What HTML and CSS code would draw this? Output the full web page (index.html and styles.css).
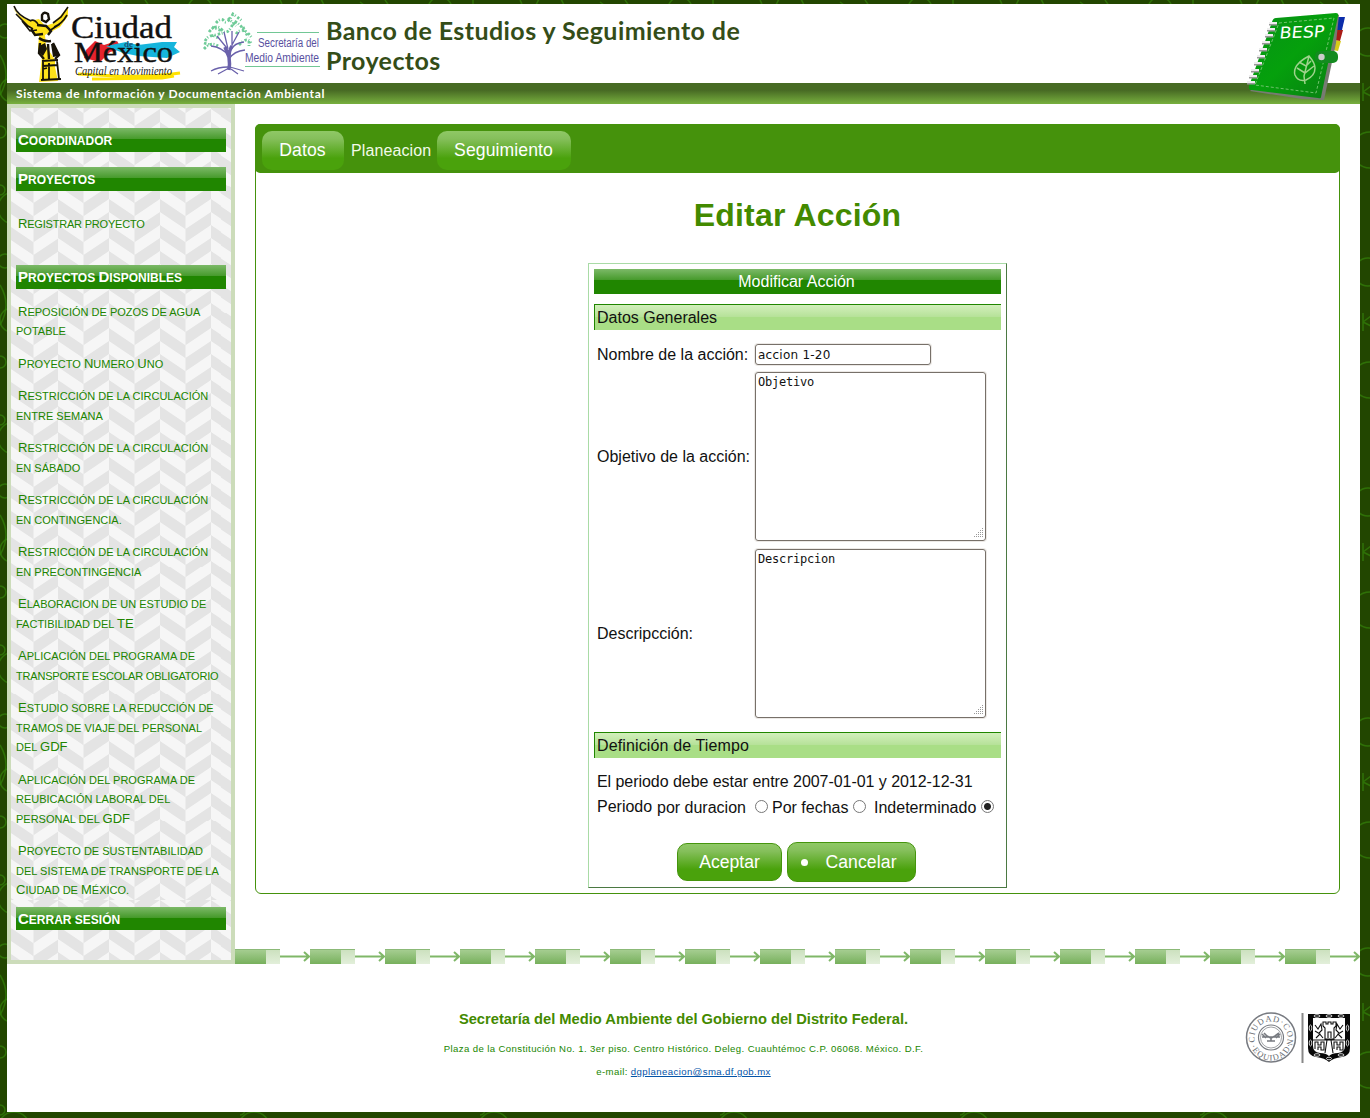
FILE: index.html
```html
<!DOCTYPE html>
<html lang="es">
<head>
<meta charset="utf-8">
<title>Banco de Estudios y Seguimiento de Proyectos</title>
<link rel="stylesheet" href="styles.css">
</head>
<body>
<div class="page">
<header class="header">
  <div class="brand">
    <svg class="logo-city" width="178" height="79" viewBox="7 4 178 79">
      <path d="M78 74l38 2q35 1 64-3M92 79l70-1 12-2" stroke="#ffe100" stroke-width="3" fill="none"/>
      <path d="M86 50l9-9 9 4 13-4 5 8-12 3-10 10-16-4z" fill="#e5232d"/>
      <path d="M106 46l20-4 12 3 24-3 15 0-3 5 6 5-13 6-29-2-15-3z" fill="#16b5dc"/>
      <path d="M13 7q4 9 17 14l9-2 6 7 9-3 14-16 0 9-8 11-15 8 1 11 9 14 0 7 3 14-19 1 2-16 1-9-4-8 1-13-6-2-2-6-9-8-7-9z" fill="#ffe21a"/>
      <path d="M14 6q3 9 17 15M16 14l12 12 5 3M22 21l8 10 7-1M30 21q5-3 9 5M68 7l-7 10-8 6M67 15q-5 9-13 12M60 24l-11 7" stroke="#18140a" stroke-width="1.600" fill="none"/>
      <path d="M42 15q2-4 6-1l1 5-3 3-4-2zM37 25l9 1 5 5-3 4M31 29l4 6 8-1M39 38q5 4 12 3M40 43l-1 10 5 6M53 43l6 12-4 4M48 44l1 15" stroke="#18140a" stroke-width="2.400" fill="none"/>
      <path d="M39 46l6-3 2 6-4 7-4-4zM51 44l3 0 5 12-6 1z" fill="#18140a"/>
      <path d="M42 61l16-1M43 61l0 19M49 63l0 17M57 61l2 18M41 80l20-1M43 66l14-1M43 69l4-1" stroke="#18140a" stroke-width="1.800" fill="none"/>
      <text x="71" y="38" class="city-name" textLength="101" lengthAdjust="spacingAndGlyphs">Ciudad</text>
      <text x="74" y="62" class="city-name low" textLength="99" lengthAdjust="spacingAndGlyphs">México</text>
      <text x="124" y="47" class="city-de">de</text>
      <text x="75" y="75" class="city-tag" textLength="97" lengthAdjust="spacingAndGlyphs">Capital en Movimiento</text>
    </svg>
    <svg class="logo-sma" width="121" height="66" viewBox="201 12 121 66">
      <g fill="none" stroke="#6fcb98" stroke-width="2.800" stroke-dasharray="2.500 1.500 1 2">
        <path d="M216 23q5-6 8-2t9-7q7 5 9 7M209 32q7-9 13-2t12-9q9 5 10 11M205 41q5-9 13-3M236 34q7-9 16 4M204 49q7-8 14-3M239 45q8-9 12-2M212 27l10 4M228 18l8 8M243 27l5 10M211 36l12-3M204 43l6 2M249 41v5"/>
      </g>
      <g fill="none" stroke="#6a61ab">
        <path stroke-width="3.500" d="M229 70q1-6 0-13l-4-10M229 58q0-8 3-12"/>
        <path stroke-width="1.300" d="M229 56q-7-9-18-10M226 47l-9-11M228 49l-4-17M232 45l7-13M232 46v-15M231 50q3-7 13-8M229 59q5-8 16-9M228 67q-10 0-17 4M229 68l-11 6M230 67l14 4M231 69l7 5"/>
      </g>
      <path d="M257 32.500h62M245 66.500h75" stroke="#72c795"/>
      <text x="258" y="47" class="sma" textLength="61" lengthAdjust="spacingAndGlyphs">Secretaría del</text>
      <text x="245" y="62" class="sma" textLength="74" lengthAdjust="spacingAndGlyphs">Medio Ambiente</text>
    </svg>
    <h1 class="site-title">Banco de Estudios y Seguimiento de<br>Proyectos</h1>
  </div>
  <div class="strap"><span>Sistema de Información y Documentación Ambiental</span></div>
  <svg class="logo-besp" width="104" height="94" viewBox="1246 10 104 94">
    <defs><linearGradient id="cover" x1="0" y1="0" x2="1" y2="1"><stop offset="0" stop-color="#079117"/><stop offset=".5" stop-color="#05a00c"/><stop offset="1" stop-color="#087d12"/></linearGradient></defs>
    <path d="M1334 17l11 0-3 13-9 0z" fill="#0b2caa"/>
    <path d="M1334 30l9 0-3 11-9-1z" fill="#a91b16"/>
    <path d="M1332 40l9 1-3 10-10-2z" fill="#d7cb17"/>
    <path d="M1336 14l3 1-3 28-12 57-22-1-52-8z" fill="#777b72"/>
    <path d="M1276 18l60-5q3 0 2 3l-17 81q0 2-3 1l-66-8q-4 0-3-4l23-64q1-4 4-4z" fill="url(#cover)"/>
    <path d="M1279 23l55-5-18 75-61-8z" fill="none" stroke="#79c776" stroke-width=".9" stroke-dasharray="3 2"/>
    <g stroke="#999" stroke-width="3"><path d="M1269 24h8M1267 30h8M1265 36h8M1262 43h8M1259 50h8M1257 57h8M1254 64h8M1251 71h8M1249 77h8M1247 83h8"/></g>
    <g stroke="#eee" stroke-width="2"><path d="M1269 23h8M1267 29h8M1265 35h8M1262 42h8M1259 49h8M1257 56h8M1254 63h8M1251 70h8M1249 76h8M1247 82h8"/></g>
    <rect x="1315" y="51" width="23" height="12" rx="5" fill="#148b20"/>
    <circle cx="1321.500" cy="57" r="3.200" fill="#ccc"/>
    <path d="M1309 56q-17 9-14 19 3 7 11 5 9-4 9-12 0-5-6-12zl-5 20 1 8M1297 68l8 5 9-7M1299 62l7 4 5-5" fill="none" stroke="#9fd38d" stroke-width="1.500"/>
    <text class="besp" textLength="45" lengthAdjust="spacingAndGlyphs" transform="translate(1279 38.500) rotate(-2) skewX(-8)">BESP</text>
  </svg>
</header>

<div class="main">
  <aside class="sidebar">
    <div class="menu">
      <h2><i>C</i>oordinador</h2>
      <h2><i>P</i>royectos</h2>
      <p class="register"><a><i>R</i>egistrar proyecto</a></p>
      <h2><i>P</i>royectos <i>D</i>isponibles</h2>
      <ul>
        <li><i>R</i>eposición de pozos de agua<br>potable</li>
        <li><i>P</i>royecto <i>N</i>umero <i>U</i>no</li>
        <li><i>R</i>estricción de la circulación<br>entre semana</li>
        <li><i>R</i>estricción de la circulación<br>en sábado</li>
        <li><i>R</i>estricción de la circulación<br>en contingencia.</li>
        <li><i>R</i>estricción de la circulación<br>en precontingencia</li>
        <li><i>E</i>laboracion de un estudio de<br>factibilidad del <i>TE</i></li>
        <li><i>A</i>plicación del programa de<br><span class="tight">transporte escolar obligatorio</span></li>
        <li><i>E</i>studio sobre la reducción de<br>tramos de viaje del personal<br>del <i>GDF</i></li>
        <li><i>A</i>plicación del programa de<br>reubicación laboral del<br>personal del <i>GDF</i></li>
        <li><i>P</i>royecto de sustentabilidad<br>del sistema de transporte de la<br><i>C</i>iudad de <i>M</i>éxico.</li>
      </ul>
    </div>
    <div class="session"><h2><i>C</i>errar sesión</h2></div>
  </aside>

  <main class="content">
    <section class="panel">
      <nav class="tabs"><a class="tab">Datos</a><span class="current">Planeacion</span><a class="tab wide">Seguimiento</a></nav>
      <h2 class="title">Editar Acción</h2>
      <form class="form">
        <div class="legend">Modificar Acción</div>
        <div class="group">Datos Generales</div>
        <div class="fields">
          <label>Nombre de la acción:</label><div class="box input">accion 1-20</div>
          <label>Objetivo de la acción:</label><div class="box area">Objetivo<svg class="grip" width="12" height="12"><path d="M10 1.500h1M8 3.500h1M10 3.500h1M6 5.500h1M8 5.500h1M10 5.500h1M4 7.500h1M6 7.500h1M8 7.500h1M10 7.500h1M2 9.500h1M4 9.500h1M6 9.500h1M8 9.500h1M10 9.500h1" stroke="#999"/></svg></div>
          <label>Descripcción:</label><div class="box area">Descripcion<svg class="grip" width="12" height="12"><path d="M10 1.500h1M8 3.500h1M10 3.500h1M6 5.500h1M8 5.500h1M10 5.500h1M4 7.500h1M6 7.500h1M8 7.500h1M10 7.500h1M2 9.500h1M4 9.500h1M6 9.500h1M8 9.500h1M10 9.500h1" stroke="#999"/></svg></div>
        </div>
        <div class="group time">Definición de Tiempo</div>
        <p class="note">El periodo debe estar entre 2007-01-01 y 2012-12-31</p>
        <div class="period"><span class="p0">Periodo</span><span class="p1">por duracion</span><b class="radio"></b><span class="p2">Por fechas</span><b class="radio"></b><span class="p3">Indeterminado</span><b class="radio on"></b></div>
        <div class="actions"><a class="button ok">Aceptar</a><a class="button cancel"><b class="dot"></b>Cancelar</a></div>
      </form>
    </section>
    <div class="arrows"></div>
  </main>
</div>

<footer class="footer">
  <div class="credits">
    <h3>Secretaría del Medio Ambiente del Gobierno del Distrito Federal.</h3>
    <p class="address">Plaza de la Constitución No. 1. 3er piso. Centro Histórico. Deleg. Cuauhtémoc C.P. 06068. México. D.F.</p>
    <p class="mail">e-mail: <a>dgplaneacion@sma.df.gob.mx</a></p>
  </div>
  <svg class="seals" width="107" height="52" viewBox="1245 1012 107 52">
    <defs><path id="ringTop" d="M1255.300 1043a16.500 16.500 0 1 1 31.400 0"/><path id="ringLow" d="M1249.500 1039a21.500 21.500 0 0 0 43 0"/></defs>
    <g fill="none" stroke="#777a80"><circle cx="1271" cy="1037.500" r="24.500" stroke-width="1.500"/><circle cx="1271" cy="1037.500" r="12.500" stroke-width="1.200"/><circle cx="1271" cy="1037.500" r="10.500" stroke-width=".7"/><path d="M1262 1037h18M1264 1033l3 3 4 2 4-2 4-3M1262 1034l4 4M1280 1034l-4 4M1267 1041h8M1271 1037v4" stroke-width="1.600"/></g>
    <text class="seal-text"><textPath href="#ringTop" textLength="62" startOffset="1">CIUDAD·CON</textPath></text>
    <text class="seal-text"><textPath href="#ringLow" textLength="54" startOffset="7">·EQUIDAD·</textPath></text>
    <path d="M1302.500 1013v50" stroke="#888" stroke-width="2"/>
    <path d="M1308 1014h42v34q0 8-8 9-9 1-13 5-4-4-13-5-8-1-8-9z" fill="#080808"/>
    <path d="M1313 1018h32v28q0 6-7 7-6 0-9 3-3-3-9-3-7-1-7-7z" fill="#fff"/>
    <g fill="none" stroke="#111" stroke-width="1.100"><path d="M1325 1039v-11l-2-2v-4h3v2h2v-2h3v2h2v-2h3v4l-2 2v11zM1328 1038v-6h3v6M1313 1040h32M1327 1040l-2 13M1331 1040l2 13M1315 1049v-7h3v3h3v-3h3v8h-3v-3h-3v3M1334 1049v-7h3v3h3v-3h3v8h-3v-3h-3v3M1315 1025l3 4 3-5 1 6-3 3 4 5M1315 1031l5 3-4 4M1343 1025l-3 4-3-5-1 6 3 3-4 5M1343 1031l-5 3 4 4"/></g>
    <g fill="none" stroke="#fff" stroke-width=".8"><ellipse cx="1317" cy="1016" rx="3" ry="1.300"/><ellipse cx="1329" cy="1016" rx="3" ry="1.300"/><ellipse cx="1341" cy="1016" rx="3" ry="1.300"/><ellipse cx="1310.500" cy="1028" rx="1.300" ry="3"/><ellipse cx="1347.500" cy="1028" rx="1.300" ry="3"/><ellipse cx="1310.500" cy="1043" rx="1.300" ry="3"/><ellipse cx="1347.500" cy="1043" rx="1.300" ry="3"/><ellipse cx="1317" cy="1055" rx="3" ry="1.300"/><ellipse cx="1341" cy="1055" rx="3" ry="1.300"/><ellipse cx="1329" cy="1058.500" rx="2.500" ry="1.300"/></g>
  </svg>
</footer>
</div>
</body>
</html>
```
FILE: styles.css
```css
* { box-sizing: border-box; }

body {
  margin: 0;
  padding: 4px 10px 6px 7px;
  font: 16px/20px "Liberation Sans", Arial, sans-serif;
  color: #111;
  background: #224600 url("data:image/svg+xml,%3Csvg xmlns='http://www.w3.org/2000/svg' width='240' height='230'%3E%3Cg fill='none' stroke='%23317e08' stroke-opacity='.75' stroke-width='1.5'%3E%3Ccircle cx='5' cy='31' r='7'/%3E%3Ccircle cx='12' cy='90' r='12'/%3E%3Ccircle cx='0' cy='132' r='6'/%3E%3Ccircle cx='0' cy='190' r='5'/%3E%3Ccircle cx='14' cy='208' r='16'/%3E%3Ccircle cx='70' cy='8' r='14'/%3E%3Ccircle cx='200' cy='9' r='12'/%3E%3Ccircle cx='168' cy='42' r='14'/%3E%3Ccircle cx='170' cy='150' r='18'/%3E%3Cpath d='M0 55q12 20 0 40M145 0q5 9 14 10M233 0v30M120 2l8 6M40 0q4 6 0 12M163 92v-9M163 92l8-6M163 92l8 4M163 92v9' /%3E%3C/g%3E%3C/svg%3E");
}

.page { height: 1108px; background: #fff; display: flex; flex-direction: column; }

/* Header */
.header { position: relative; height: 100px; }
.brand { height: 79px; display: flex; }
.logo-sma { margin: 8px 0 0 16px; }
.site-title {
  margin: 11px 0 0 4px;
  font: bold 25px/30px Lato, sans-serif;
  letter-spacing: .42px;
  color: #344d18;
  white-space: nowrap;
}
.city-name { font: 32px "Liberation Serif", serif; fill: #111; stroke: #111; stroke-width: .4px; }
.city-name.low { font-size: 29px; }
.city-de { font: bold 9px "Liberation Serif", serif; fill: #165577; }
.city-tag { font: italic 12px "Liberation Serif", serif; fill: #222; }
.sma { font: 12px "Liberation Sans", sans-serif; fill: #5850a0; }
.besp { font: 16px "DejaVu Sans", sans-serif; fill: #fff; }
.strap {
  height: 21px;
  padding-left: 9px;
  font: bold 12px/21px Lato, sans-serif;
  letter-spacing: .63px;
  color: #fff;
  background: linear-gradient(#486b24 0 35%, #78b03e);
}
.logo-besp { position: absolute; right: 10px; top: 6px; }

/* Sidebar */
.main { display: flex; height: 860px; }
.sidebar { width: 228px; border: 4px solid #ccdcba; color: #208400; }
.menu, .session {
  padding: 0 5px;
  background: #f6f6f6 url("data:image/svg+xml,%3Csvg xmlns='http://www.w3.org/2000/svg' width='50.7' height='25.800'%3E%3Cpath d='M0-25.800l25.350 17v13L0-13zM0 0l25.350 17v13L0 13zM25.350 4l25.350-17V0L25.350 17zM25.350 29.800l25.350-17v13L25.350 42.800z' fill='%23e4e4e4'/%3E%3C/svg%3E") 47.500px 14px;
}
.menu { height: 792px; padding-top: 20px; }
.session { height: 60px; padding-top: 7px; background-position: 47.500px 0; }
.sidebar h2 {
  height: 24px;
  margin: 0 0 15px;
  padding-left: 2px;
  font-size: 12px;
  line-height: 26px;
  text-transform: uppercase;
  color: #fff;
  background: linear-gradient(#7cb968, #469a2b 46%, #208600 46%);
}
.sidebar h2 i { font-size: 15px; line-height: 1px; }
.session h2 { height: 23px; }
.sidebar i { font-style: normal; }
.sidebar p, .sidebar li { font-size: 11px; line-height: 19.500px; text-indent: 2px; text-transform: uppercase; white-space: nowrap; }
.sidebar p i, .sidebar li i { font-size: 13px; line-height: 1px; }
.sidebar .register { margin: 24px 0 30px; letter-spacing: -.2px; }
.sidebar ul { margin: -1px 0 0; padding: 0; list-style: none; }
.sidebar li { margin-bottom: 13px; }
.tight { letter-spacing: -.2px; }

/* Content */
.content { flex: 1; padding-top: 20px; display: flex; flex-direction: column; justify-content: space-between; }
.panel { margin: 0 20px; height: 770px; border: 1px solid #45920c; border-radius: 6px; }
.tabs {
  display: flex;
  height: 49px;
  margin: -1px -1px 0;
  padding: 7px 7px 3px;
  border-radius: 5px;
  background: #45920c;
}
.tab, .button {
  display: flex;
  align-items: center;
  justify-content: center;
  border-radius: 10px;
  font-size: 17.600px;
  color: #fff;
  background: linear-gradient(#8fc866, #85bf5b 20%, #4aa20c 70%, #4aa20c);
}
.tab { width: 82px; padding: 0 1px 2px 0; letter-spacing: .1px; }
.tab.wide { width: 134px; }
.current { width: 93px; padding-left: 7px; line-height: 39px; color: #f3fae9; letter-spacing: .1px; }
.title { margin: 22px 0 28px; text-align: center; font-size: 32px; line-height: 40px; letter-spacing: .2px; color: #438a00; }
.form {
  width: 419px;
  height: 625px;
  margin: 0 auto;
  padding: 5px;
  border: 1px solid;
  border-color: #a9dba6 #4b7942 #4b7942 #a9dba6;
}
.legend {
  height: 25px;
  line-height: 25px;
  text-align: center;
  color: #fff;
  padding-right: 2px;
  background: linear-gradient(#7cb968, #469a2b 44%, #208600 44%);
}
.group {
  height: 26px;
  margin-top: 10px;
  padding-left: 2px;
  line-height: 25px;
  border: solid #208600;
  border-width: 1px 0 0 1px;
  background: linear-gradient(#d2efbc, #b7e29a 46%, #a9de86 46%);
}
.group.time { letter-spacing: .13px; }
.fields {
  display: grid;
  grid-template-columns: 158px 231px;
  grid-template-rows: 21px 170px 169px;
  padding: 14px 0 4px 3px;
  align-items: center;
  row-gap: 7px;
}
.fields label { white-space: nowrap; }
.box { position: relative; border: 1px solid #777069; border-radius: 3px; box-shadow: 0 0 0 1px #ece9e6; }
.input { width: 176px; height: 21px; padding-left: 2px; font: 12px/20px "DejaVu Sans", sans-serif; letter-spacing: .25px; }
.area { align-self: start; height: 169px; padding: 2px; font: 12px/15px "DejaVu Sans Mono", monospace; letter-spacing: -.22px; }
.grip { position: absolute; right: 1px; bottom: 1px; }
.note { margin: 14px 0 5px 3px; letter-spacing: -.05px; }
.period { display: flex; align-items: center; padding-left: 3px; height: 20px; white-space: nowrap; }
.period > * { flex: none; }
.p0 { width: 60px; margin-top: -1px; }
.p1 { width: 98px; }
.p2 { width: 85px; padding-left: 4px; }
.p3 { width: 115px; padding-left: 8px; }
.p1, .p2, .p3 { margin-top: 2px; }
.radio { width: 13px; height: 13px; margin-top: -1px; border: 1px solid #777; border-radius: 50%; background: #fff; }
.radio.on { background: radial-gradient(circle, #222 0 3px, #fff 4px); }
.actions { display: flex; justify-content: center; align-items: center; gap: 5px; margin: 25px 2px 0 0; height: 40px; }
.button { border: 1px solid #45950d; }
.ok { width: 105px; height: 38px; }
.cancel { width: 129px; height: 40px; gap: 17px; padding-right: 5px; letter-spacing: .1px; }
.dot { width: 7px; height: 7px; border-radius: 50%; background: #fff; }
.arrows {
  height: 15px;
  background: url("data:image/svg+xml,%3Csvg xmlns='http://www.w3.org/2000/svg' width='75' height='15'%3E%3Cdefs%3E%3ClinearGradient id='a' x2='0' y2='1'%3E%3Cstop stop-color='%23a8cf94'/%3E%3Cstop offset='1' stop-color='%2377b05c'/%3E%3C/linearGradient%3E%3ClinearGradient id='b' x2='0' y2='1'%3E%3Cstop stop-color='%23cbe0bd'/%3E%3Cstop offset='1' stop-color='%23e2efda'/%3E%3C/linearGradient%3E%3C/defs%3E%3Cpath fill='url(%23a)' d='M0 0h31v15H0z'/%3E%3Cpath fill='url(%23b)' d='M31 0h14v15H31z'/%3E%3Cpath d='M0 .5h45' stroke='%238bb977'/%3E%3Cpath d='M45 7.500h29M69 3l5 4.500-5 4.500' fill='none' stroke='%237fb768' stroke-width='2'/%3E%3C/svg%3E");
}

/* Footer */
.footer { position: relative; flex: 1; }
.credits { padding-top: 45px; text-align: center; color: #208600; }
.credits h3 { margin: 0; font-size: 14.700px; line-height: 20px; color: #438a00; }
.credits p { margin: 0; line-height: 23px; font-size: 9.600px; letter-spacing: .39px; }
.credits .address { margin-top: 8px; }
.credits a { color: #0454a8; text-decoration: underline; }
.seals { position: absolute; right: 8px; top: 48px; }
.seal-text { font: 8.500px "Liberation Serif", serif; fill: #666a70; }
```
